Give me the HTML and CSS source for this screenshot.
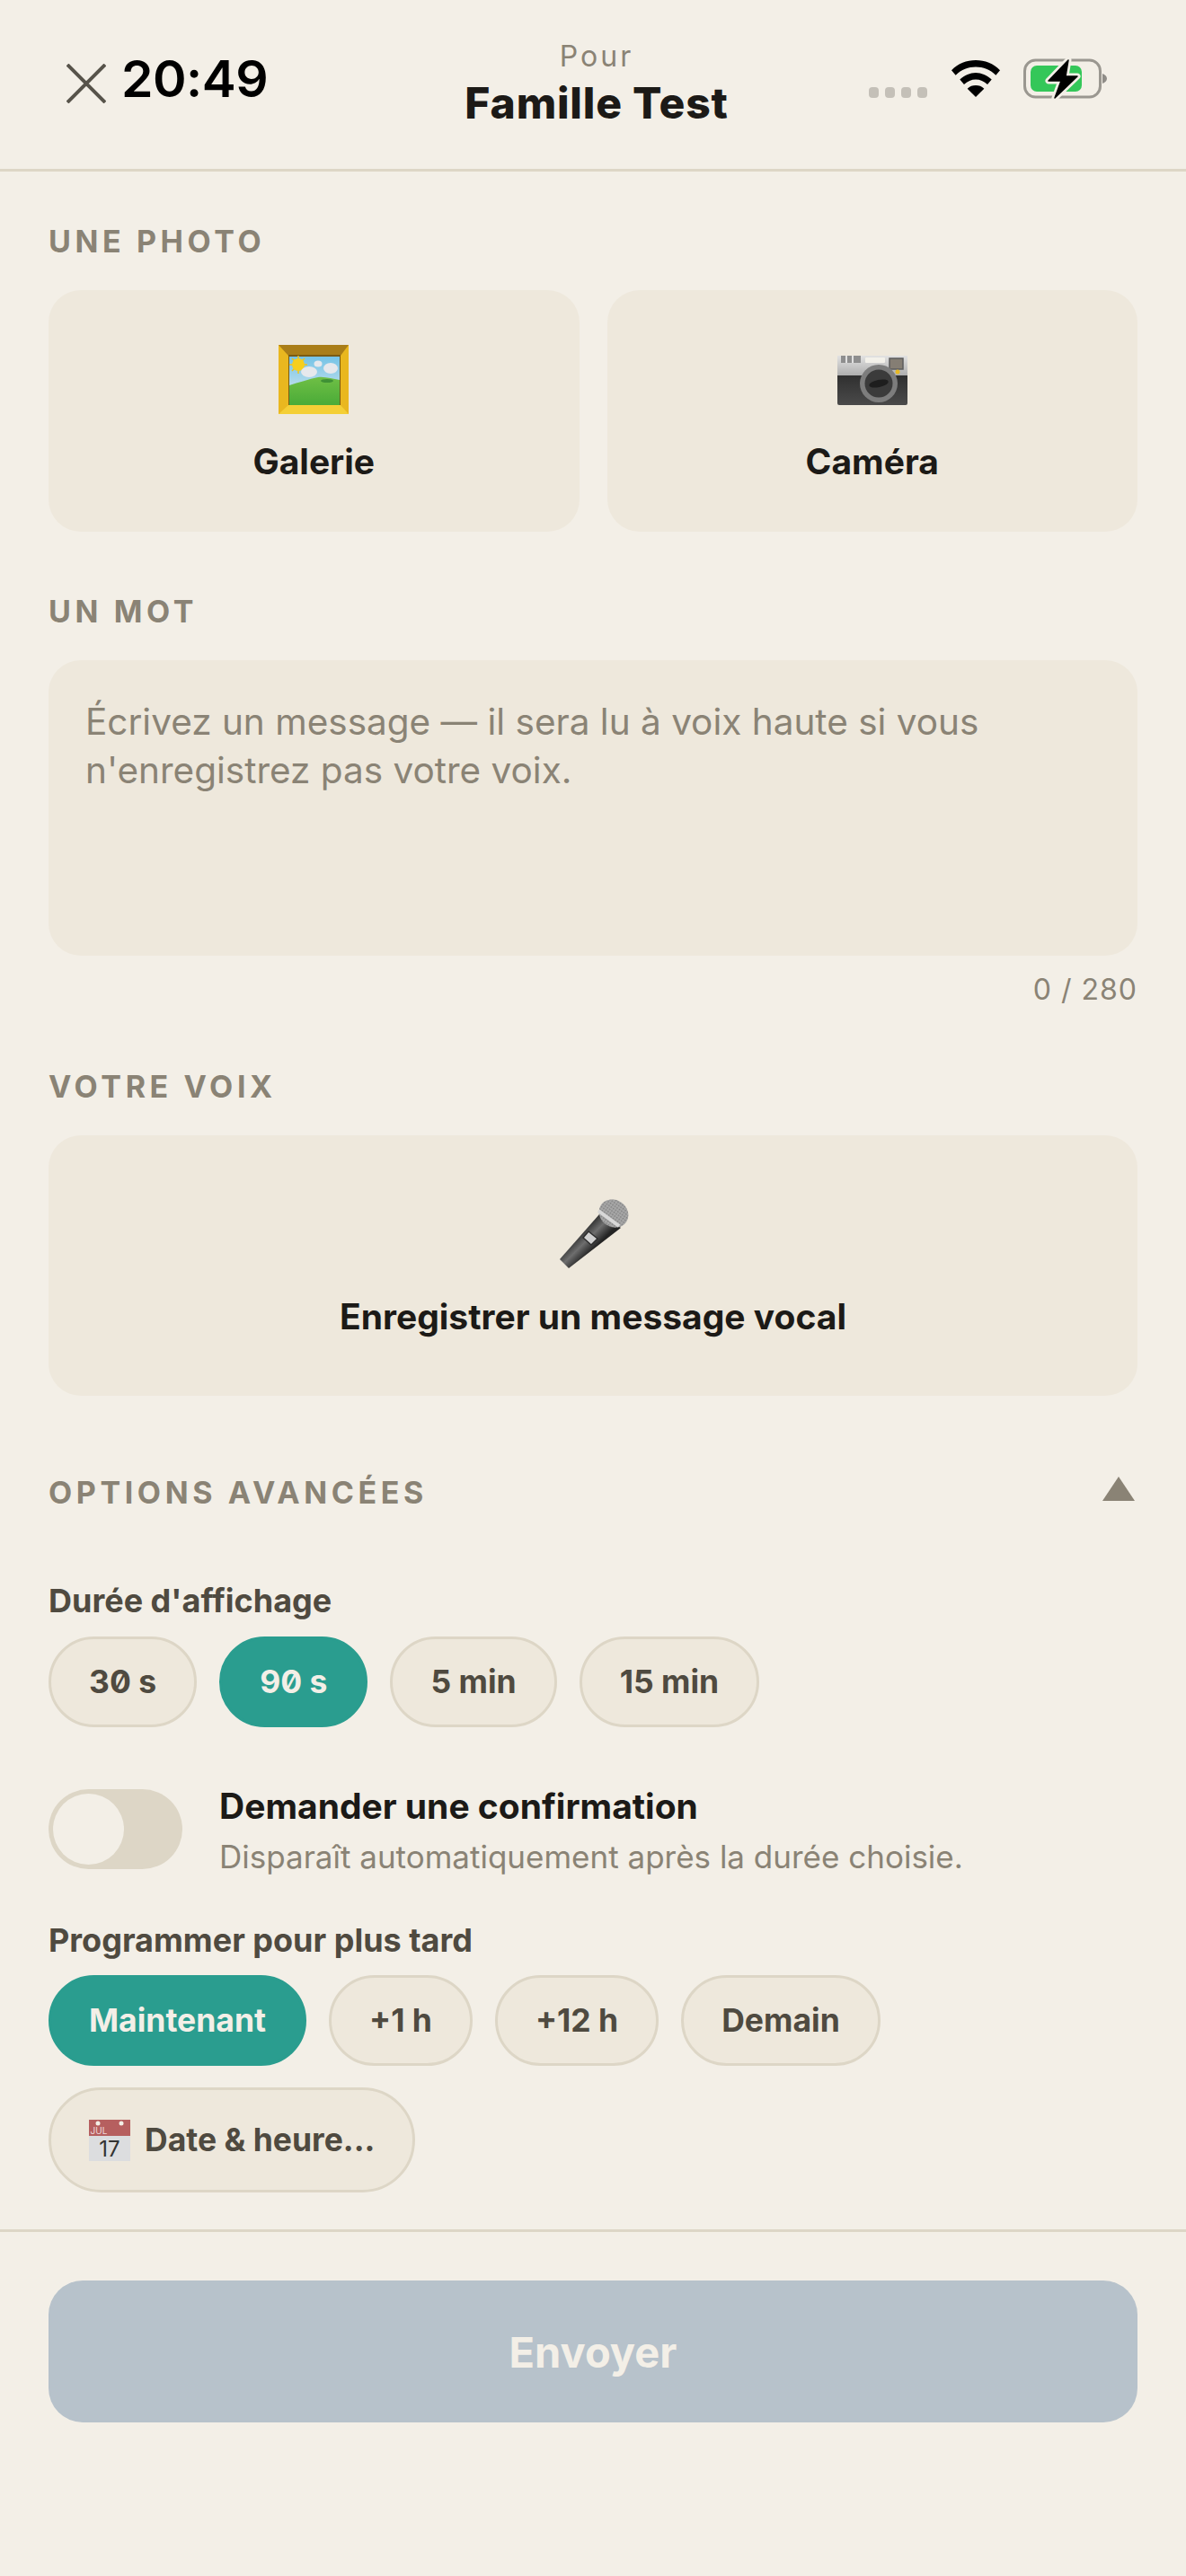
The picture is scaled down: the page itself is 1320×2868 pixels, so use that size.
FILE: index.html
```html
<!DOCTYPE html>
<html lang="fr">
<head>
    <meta charset="UTF-8">
    <meta name="viewport" content="width=device-width, initial-scale=1.0">
    <title>Nouveau message</title>
    <link rel="stylesheet" href="styles.css">
</head>
<body>
    <div class="header">
        <div class="header-left">
            <svg class="close-icon" viewBox="0 0 44 44"><path d="M1 1 L43 43 M43 1 L1 43"/></svg>
            <span class="clock">20:49</span>
        </div>
        <div class="header-title">
            <div class="pour">Pour</div>
            <div class="family">Famille Test</div>
        </div>
        <div class="status">
            <div class="dots"><i></i><i></i><i></i><i></i></div>
            <svg class="wifi" viewBox="0 0 58 44"><path d="M29 0C40 0 50 4 58 12L53 18C46 11 38 8 29 8S12 11 5 18L0 12C8 4 18 0 29 0Z"/><path d="M29 15C36 15 42 18 48 23L43 29C39 25 34 23 29 23S19 25 15 29L10 23C16 18 22 15 29 15Z"/><path d="M29 30C33 30 36 31 39 34L29 44 19 34C22 31 25 30 29 30Z"/></svg>
            <svg class="battery" viewBox="0 0 93 45">
                <rect x="1.5" y="2" width="84" height="41" rx="12" fill="none" stroke="#9a9790" stroke-width="3"/>
                <rect x="8" y="8" width="57" height="29" rx="7" fill="#34c759"/>
                <path d="M88 17c3 1 5 3 5 5.500s-2 4.500-5 5.500z" fill="#8f8c87"/>
                <path d="M50 2 L28 25 H42 L35 44 L60 20 H47Z" fill="#000" stroke="#f3efe7" stroke-width="7" stroke-linejoin="round"/>
                <path d="M50 2 L28 25 H42 L35 44 L60 20 H47Z" fill="#000" stroke="#000" stroke-width="1.500" stroke-linejoin="round"/>
            </svg>
        </div>
    </div>

    <div class="content">
        <div class="section section-photo">
            <div class="section-label">UNE PHOTO</div>
            <div class="photo-row">
                <div class="card photo-card">
                    <svg class="emoji" viewBox="0 0 82 82">
                        <defs>
                            <linearGradient id="sky" x1="0" y1="0" x2="0" y2="1"><stop offset="0" stop-color="#74c3e6"/><stop offset="1" stop-color="#e3ecef"/></linearGradient>
                            <linearGradient id="grass" x1="0" y1="0" x2="0" y2="1"><stop offset="0" stop-color="#6fbf45"/><stop offset="1" stop-color="#4aab38"/></linearGradient>
                        </defs>
                        <rect x="2" y="2" width="78" height="77" fill="#e9b71f"/>
                        <path d="M2 2H80L71 14H13Z" fill="#a97d18"/>
                        <path d="M2 79H80L71 69H13Z" fill="#f4cf36"/>
                        <rect x="13" y="13" width="58" height="56" fill="#7a5a12"/>
                        <rect x="14" y="15" width="56" height="54" fill="url(#sky)"/>
                        <g stroke="#f2c413" stroke-width="1.500"><path d="M24 14V34M14 24H34M17 17L31 31M31 17L17 31"/></g>
                        <circle cx="24" cy="24" r="7" fill="#f7cf1d"/>
                        <ellipse cx="36" cy="32" rx="9" ry="6" fill="#e6e8ec"/>
                        <ellipse cx="46" cy="23" rx="4.500" ry="3.500" fill="#e6e8ec"/>
                        <ellipse cx="60" cy="28" rx="8" ry="6" fill="#e6e8ec"/>
                        <path d="M14 47C24 44 36 40 46 38 54 37 62 40 70 41V69H14Z" fill="url(#grass)"/>
                        <ellipse cx="56" cy="42" rx="7" ry="2" fill="#3f9135"/>
                    </svg>
                    <div class="card-title">Galerie</div>
                </div>
                <div class="card photo-card">
                    <svg class="emoji" viewBox="0 0 82 82">
                        <defs>
                            <linearGradient id="silver" x1="0" y1="0" x2="0" y2="1"><stop offset="0" stop-color="#e2e2e2"/><stop offset="1" stop-color="#aeaeae"/></linearGradient>
                            <linearGradient id="camBody" x1="0" y1="0" x2="0" y2="1"><stop offset="0" stop-color="#2e2e2e"/><stop offset="1" stop-color="#4a4a4a"/></linearGradient>
                        </defs>
                        <rect x="2" y="34" width="78" height="35" rx="2" fill="url(#camBody)"/>
                        <rect x="2" y="14" width="78" height="22" fill="url(#silver)"/>
                        <path d="M6 14H28V22H6Z" fill="#8e8e8e"/>
                        <path d="M12 14V22M19 14V22" stroke="#e0e0e0" stroke-width="2"/>
                        <rect x="33" y="16" width="22" height="6" rx="1" fill="#f3f1ea"/>
                        <rect x="60" y="17" width="15" height="12" fill="#857e74" stroke="#5c5c5c" stroke-width="1.500"/>
                        <circle cx="48" cy="45" r="21" fill="#7d7d7d"/>
                        <circle cx="48" cy="45" r="15.500" fill="#3b3b3b"/>
                        <ellipse cx="48" cy="45" rx="11" ry="4" fill="#1e1e1e" transform="rotate(-12 48 45)"/>
                        <circle cx="69" cy="32" r="2.500" fill="#e8b923"/>
                    </svg>
                    <div class="card-title">Caméra</div>
                </div>
            </div>
        </div>

        <div class="section section-word">
            <div class="section-label">UN MOT</div>
            <div class="card message-box">Écrivez un message — il sera lu à voix haute si vous n'enregistrez pas votre voix.</div>
            <div class="counter">0 / 280</div>
        </div>

        <div class="section section-voice">
            <div class="section-label">VOTRE VOIX</div>
            <div class="card voice-card">
                <svg class="emoji" viewBox="0 0 82 82">
                    <defs>
                        <linearGradient id="micBody" gradientUnits="userSpaceOnUse" x1="32" y1="32" x2="49" y2="49"><stop offset="0" stop-color="#2b2b2b"/><stop offset="0.500" stop-color="#6e6e6e"/><stop offset="1" stop-color="#242424"/></linearGradient>
                        <pattern id="mesh" width="3" height="3" patternUnits="userSpaceOnUse"><rect width="3" height="3" fill="#a8a8a8"/><rect width="1.500" height="1.500" fill="#7c7c7c"/></pattern>
                    </defs>
                    <path d="M48 18L72 33 14 78 4 68Z" fill="url(#micBody)"/>
                    <ellipse cx="64" cy="17" rx="17" ry="15" transform="rotate(35 64 17)" fill="url(#mesh)"/>
                    <path d="M47 14L70 31" stroke="#d8d8d8" stroke-width="4"/>
                    <path d="M36 37L46 45 39 52 30 44Z" fill="#d0d0d0" stroke="#2d2d2d" stroke-width="1.500"/>
                </svg>
                <div class="card-title">Enregistrer un message vocal</div>
            </div>
        </div>

        <div class="section section-advanced">
            <div class="advanced-head">
                <div class="section-label">OPTIONS AVANCÉES</div>
                <div class="triangle"></div>
            </div>

            <div class="sub-label duration-label">Durée d'affichage</div>
            <div class="chips">
                <div class="chip">30 s</div>
                <div class="chip active">90 s</div>
                <div class="chip">5 min</div>
                <div class="chip">15 min</div>
            </div>

            <div class="toggle-row">
                <div class="toggle"><div class="knob"></div></div>
                <div class="toggle-text">
                    <div class="toggle-title">Demander une confirmation</div>
                    <div class="toggle-sub">Disparaît automatiquement après la durée choisie.</div>
                </div>
            </div>

            <div class="sub-label">Programmer pour plus tard</div>
            <div class="chips wrap">
                <div class="chip active">Maintenant</div>
                <div class="chip">+1 h</div>
                <div class="chip">+12 h</div>
                <div class="chip">Demain</div>
                <div class="chip date-chip">
                    <svg class="cal" viewBox="0 0 46 46">
                        <rect width="46" height="46" fill="#dcdddf"/>
                        <rect width="46" height="18" fill="#b65f5f"/>
                        <circle cx="10" cy="4" r="2.500" fill="#f3efe7"/>
                        <circle cx="36" cy="4" r="2.500" fill="#f3efe7"/>
                        <text x="11" y="16" text-anchor="middle" class="cal-month">JUL</text>
                        <text x="23" y="41" text-anchor="middle" class="cal-num">17</text>
                    </svg>
                    <span>Date &amp; heure...</span>
                </div>
            </div>
        </div>
    </div>

    <div class="footer">
        <div class="send-btn">Envoyer</div>
    </div>
</body>
</html>
```

FILE: styles.css
```css
* {
    margin: 0;
    padding: 0;
    box-sizing: border-box;
}

body {
    font-family: 'Inter', sans-serif;
    background: #f3efe7;
    height: 2868px;
    color: #1c1a17;
    display: flex;
    flex-direction: column;
}

.header {
    height: 191px;
    padding: 45px 66px 0 74px;
    display: grid;
    grid-template-columns: 1fr auto 1fr;
    align-items: start;
    border-bottom: 3px solid #ddd6c6;
}

.header-left {
    display: flex;
    align-items: flex-start;
    gap: 17px;
}

.close-icon {
    width: 44px;
    height: 44px;
    margin-top: 26px;
}

.close-icon path {
    stroke: #57534a;
    stroke-width: 4;
    fill: none;
}

.clock {
    font-size: 57px;
    font-weight: 600;
    letter-spacing: -0.5px;
    color: #000;
    line-height: 72px;
    margin-top: 7px;
}

.header-title {
    text-align: center;
}

.pour {
    font-size: 32px;
    letter-spacing: 3px;
    color: #8a8375;
    line-height: 36px;
}

.family {
    font-size: 48px;
    font-weight: 800;
    letter-spacing: 0.8px;
    line-height: 62px;
    margin-top: 3px;
}

.status {
    display: flex;
    align-items: flex-start;
    justify-content: flex-end;
    margin: 22px 22px 0 0;
}

.dots {
    display: flex;
    gap: 7px;
    margin: 30px 26px 0 0;
}

.dots i {
    width: 11px;
    height: 12px;
    border-radius: 4px;
    background: #c4c0b8;
}

.wifi {
    width: 56px;
    height: 41px;
    margin-right: 25px;
}

.battery {
    width: 93px;
    height: 45px;
    margin-top: -2px;
}

.content {
    flex: 1;
    padding: 0 54px;
}

.section-photo {
    margin-top: 58px;
}

.section-word {
    margin-top: 69px;
}

.section-voice {
    margin-top: 68px;
}

.section-advanced {
    margin-top: 88px;
}

.section-label {
    font-size: 34px;
    font-weight: 700;
    letter-spacing: 4.6px;
    color: #8a8375;
    line-height: 40px;
}

.card {
    background: #eee8dc;
    border-radius: 36px;
}

.photo-row {
    display: flex;
    gap: 31px;
    margin-top: 34px;
}

.photo-card {
    flex: 1;
    height: 269px;
    display: flex;
    flex-direction: column;
    align-items: center;
    padding-top: 59px;
}

.emoji {
    width: 82px;
    height: 82px;
}

.card-title {
    font-size: 39px;
    font-weight: 700;
    line-height: 48px;
    margin-top: 26px;
}

.message-box {
    height: 329px;
    margin-top: 34px;
    padding: 42px 41px;
    font-size: 40.5px;
    line-height: 54px;
    color: #8a8375;
}

.counter {
    text-align: right;
    font-size: 32px;
    letter-spacing: 1px;
    color: #8a8375;
    line-height: 40px;
    margin-top: 18px;
}

.voice-card {
    height: 290px;
    margin-top: 34px;
    display: flex;
    flex-direction: column;
    align-items: center;
    padding-top: 70px;
}

.advanced-head {
    display: flex;
    justify-content: space-between;
    align-items: center;
}

.triangle {
    width: 0;
    height: 0;
    border-left: 18px solid transparent;
    border-right: 18px solid transparent;
    border-bottom: 27px solid #8a8375;
    margin: 0 3px 9px 0;
}

.sub-label {
    font-size: 36px;
    font-weight: 700;
    line-height: 44px;
    color: #4f4a40;
}

.duration-label {
    margin-top: 78px;
}

.chips {
    display: flex;
    gap: 25px;
    margin-top: 18px;
}

.chips.wrap {
    flex-wrap: wrap;
    gap: 24px 25px;
    margin-top: 17px;
}

.chip {
    height: 101px;
    padding: 0 42px;
    display: flex;
    align-items: center;
    gap: 16px;
    border: 3px solid #ddd6c6;
    border-radius: 51px;
    background: #eee8dc;
    font-size: 35.5px;
    font-weight: 700;
    font-feature-settings: "zero";
    color: #4f4a40;
}

.chip.active {
    background: #2a9d8f;
    border-color: #2a9d8f;
    color: #f3efe7;
}

.date-chip {
    height: 117px;
    border-radius: 59px;
}

.cal {
    width: 46px;
    height: 46px;
}

.cal-month {
    font-size: 10px;
    font-weight: 400;
    fill: #f0dcdc;
}

.cal-num {
    font-size: 24px;
    font-weight: 400;
    fill: #333;
}

.toggle-row {
    display: flex;
    align-items: flex-start;
    gap: 41px;
    margin: 69px 0 50px;
}

.toggle {
    width: 149px;
    height: 89px;
    border-radius: 45px;
    background: #ddd6c6;
    padding: 5px;
}

.knob {
    width: 79px;
    height: 79px;
    border-radius: 50%;
    background: #f3efe7;
}

.toggle-text {
    margin-top: -4px;
}

.toggle-title {
    font-size: 39px;
    font-weight: 700;
    line-height: 46px;
}

.toggle-sub {
    font-size: 35px;
    line-height: 42px;
    color: #8a8375;
    margin-top: 12px;
}

.footer {
    height: 386px;
    padding: 54px 54px 0;
    border-top: 3px solid #ddd6c6;
}

.send-btn {
    height: 158px;
    border-radius: 38px;
    background: #b7c2cb;
    color: #f3efe7;
    font-size: 47px;
    font-weight: 700;
    display: flex;
    align-items: center;
    justify-content: center;
}
```
